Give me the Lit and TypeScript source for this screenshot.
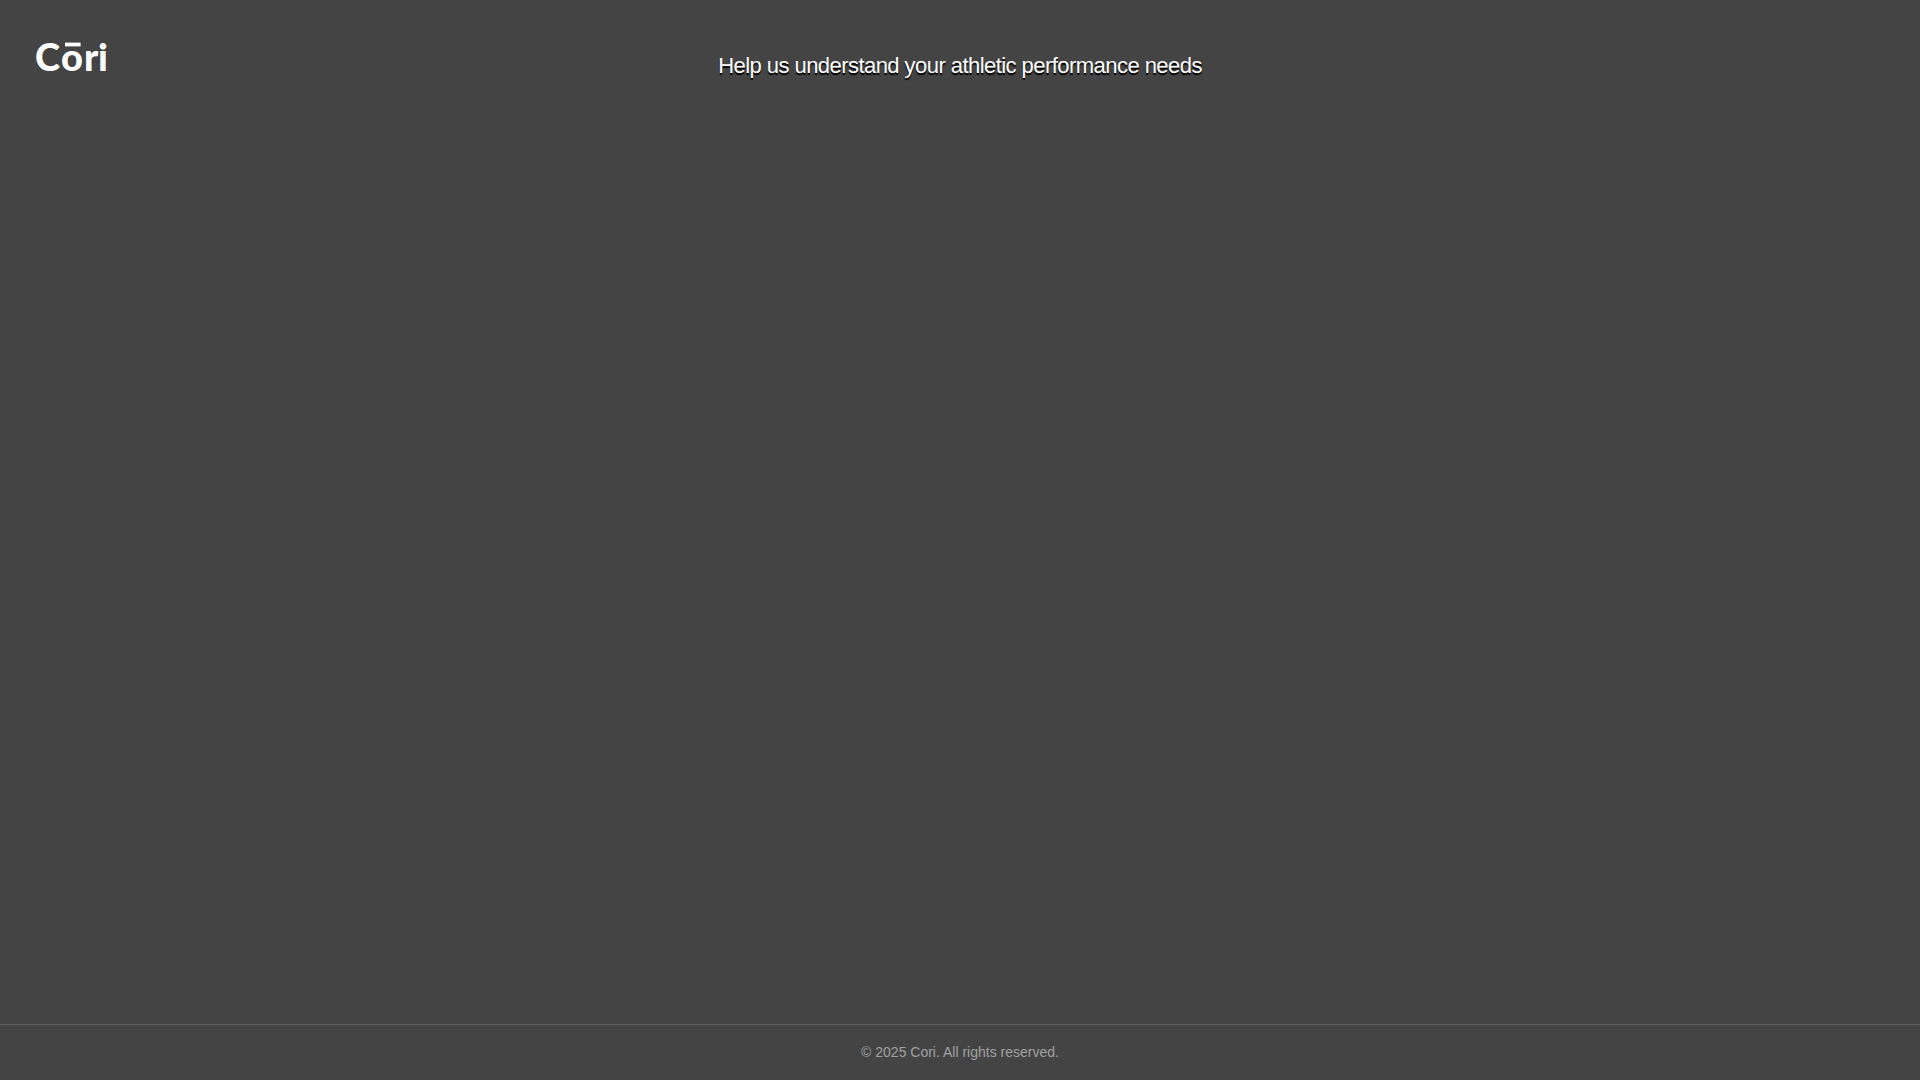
import { LitElement, html, css } from "lit";
import { customElement } from "lit/decorators.js";

@customElement("app-root")
export class AppRoot extends LitElement {
  static styles = css`
    :host {
      display: flex;
      flex-direction: column;
      min-height: 100vh;
      background: #444444;
      color: #ffffff;
      font-family: "Liberation Sans", Arial, sans-serif;
    }
    .header {
      display: grid;
      grid-template-columns: 1fr auto 1fr;
      align-items: start;
      padding: 32px;
    }
    .logo {
      justify-self: start;
      color: #ffffff;
      text-decoration: none;
    }
    .wordmark {
      display: block;
      width: 80px;
      height: 48px;
      fill: currentColor;
      font-family: Lato, sans-serif;
      font-size: 38px;
      font-weight: 900;
    }
    .title {
      margin: 0;
      padding-top: 16px;
      font-size: 22px;
      font-weight: 400;
      line-height: 36px;
      letter-spacing: -0.025em;
      text-align: center;
      text-shadow: 0 2px 1px #000000;
    }
    .content {
      flex: 1;
    }
    .footer {
      padding: 20px;
      border-top: 1px solid #5c5c5c;
      color: #a1a1a1;
      font-size: 14px;
      line-height: 15px;
      text-align: center;
    }
    .copyright {
      margin: 0;
    }
  `;

  render() {
    return html`
      <header class="header">
        <a class="logo" href="/" aria-label="Cōri">
          <svg class="wordmark" viewBox="0 0 80 48" aria-hidden="true">
            <text x="3 29 52 66" y="39">Cori</text>
            <rect x="33" y="10.6" width="15.6" height="3.8" />
          </svg>
        </a>
        <h1 class="title">Help us understand your athletic performance needs</h1>
      </header>
      <main class="content"></main>
      <footer class="footer">
        <p class="copyright">© 2025 Cori. All rights reserved.</p>
      </footer>
    `;
  }
}
